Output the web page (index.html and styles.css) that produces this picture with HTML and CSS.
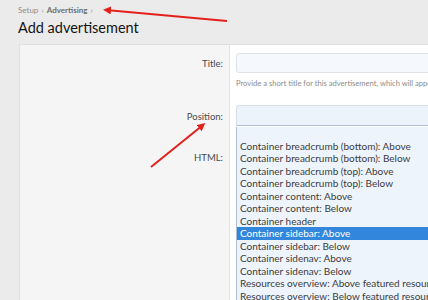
FILE: index.html
```html
<!DOCTYPE html>
<html lang="en">
<head>
    <meta charset="UTF-8">
    <meta name="viewport" content="width=device-width, initial-scale=1.0">
    <title>Add advertisement</title>
    <link rel="stylesheet" href="styles.css">
</head>
<body>
    <div class="breadcrumb">
        <span>Setup</span> <span class="sep">&rsaquo;</span>
        <b>Advertising</b> <span class="sep">&rsaquo;</span>
    </div>
    <h1>Add advertisement</h1>

    <div class="block">
        <div class="row">
            <div class="label">Title:</div>
            <div class="field">
                <input type="text" class="input">
                <div class="hint">Provide a short title for this advertisement, which will appear in the list of advertisements.</div>
            </div>
        </div>

        <div class="row row-position">
            <div class="label">Position:</div>
            <div class="field">
                <div class="select"></div>
                <!-- open dropdown of the select -->
                <ul class="dropdown">
                    <li>&nbsp;</li>
                    <li>Container breadcrumb (bottom): Above</li>
                    <li>Container breadcrumb (bottom): Below</li>
                    <li>Container breadcrumb (top): Above</li>
                    <li>Container breadcrumb (top): Below</li>
                    <li>Container content: Above</li>
                    <li>Container content: Below</li>
                    <li>Container header</li>
                    <li class="selected">Container sidebar: Above</li>
                    <li>Container sidebar: Below</li>
                    <li>Container sidenav: Above</li>
                    <li>Container sidenav: Below</li>
                    <li>Resources overview: Above featured resources</li>
                    <li>Resources overview: Below featured resources</li>
                </ul>
            </div>
        </div>

        <div class="row row-html">
            <div class="label">HTML:</div>
            <div class="field"></div>
        </div>
    </div>

    <svg class="marks" width="428" height="300" viewBox="0 0 428 300">
        <defs>
            <marker id="head" markerWidth="8" markerHeight="8" refX="5" refY="4" orient="auto" markerUnits="userSpaceOnUse">
                <path d="M0,0 L8,4 L0,8 Z" fill="#e3211c"/>
            </marker>
        </defs>
        <line x1="227" y1="21" x2="106" y2="10" stroke="#e3211c" stroke-width="2" marker-end="url(#head)"/>
        <line x1="151" y1="167" x2="203" y2="125" stroke="#e3211c" stroke-width="2" marker-end="url(#head)"/>
    </svg>
</body>
</html>
```

FILE: styles.css
```css
body {
    margin: 0;
    width: 428px;
    height: 300px;
    overflow: hidden;
    background: #ebebeb;
    font-family: Lato, "Open Sans", sans-serif;
    color: #141414;
    position: relative;
}
.breadcrumb {
    padding: 4px 0 0 18px;
    font-size: 8px;
    line-height: 12px;
    color: #8c8c8c;
}
.breadcrumb b {
    color: #6e6e6e;
    font-weight: 700;
}
.breadcrumb .sep {
    margin: 0 1px;
}
h1 {
    margin: 2px 0 0 18px;
    font-size: 14.5px;
    font-weight: 400;
    line-height: 20px;
}
.block {
    margin: 6px 0 0 19px;
    border-top: 1px solid #e0e0e0;
    border-left: 1px solid #e0e0e0;
    background: #fff;
    height: 260px;
}
.row {
    display: flex;
}
.label {
    width: 203px;
    flex-shrink: 0;
    padding-right: 6px;
    text-align: right;
    font-size: 9.5px;
    color: #4a4a4a;
    background: #f5f5f5;
    border-right: 1px solid #e4e4e4;
}
.field {
    flex: 1;
    padding-left: 6px;
    position: relative;
    white-space: nowrap;
    overflow: hidden;
}
.row:first-child .label,
.row:first-child .field {
    padding-top: 8px;
}
.row:first-child .label {
    line-height: 21px;
}
.input {
    display: block;
    box-sizing: border-box;
    width: 260px;
    height: 20px;
    margin: 0;
    border: 1px solid #dfe3e8;
    border-radius: 3px;
    background: #f5f9fd;
}
.hint {
    margin-top: 4px;
    font-size: 7.6px;
    line-height: 12px;
    color: #8c8c8c;
    padding-bottom: 7px;
}
.row-position .label,
.row-position .field {
    padding-top: 9px;
}
.row-position .field {
    overflow: visible;
}
.row-position .label {
    line-height: 23px;
    padding-bottom: 23px;
}
.select {
    box-sizing: border-box;
    width: 260px;
    height: 21px;
    border: 1px solid #d6dee8;
    border-bottom-color: #aebdd0;
    border-radius: 3px 3px 0 0;
    background: #edf3fb;
}
.dropdown {
    position: absolute;
    left: 6px;
    top: 31px;
    width: 260px;
    margin: 0;
    padding: 0;
    list-style: none;
    background: #eef4fc;
    border-left: 1px solid #aebdd0;
    font-size: 10px;
    line-height: 12.5px;
    color: #3c3c3c;
    white-space: nowrap;
    z-index: 1;
}
.dropdown li {
    padding-left: 3px;
}
.dropdown .selected {
    background: #3287dc;
    color: #fff;
}
.row-html .label {
    line-height: 14px;
    height: 200px;
}
.marks {
    position: absolute;
    left: 0;
    top: 0;
    z-index: 2;
    pointer-events: none;
}
```
